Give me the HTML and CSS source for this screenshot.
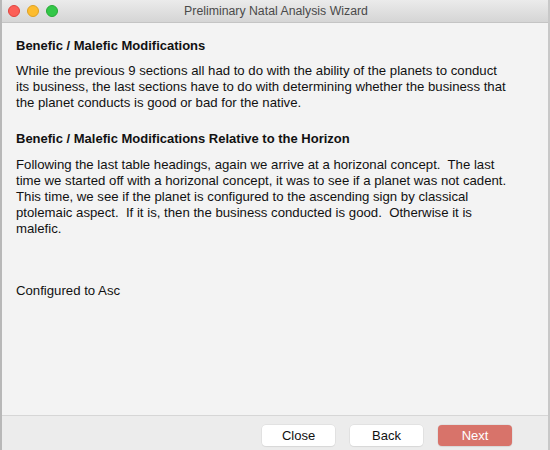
FILE: index.html
```html
<!DOCTYPE html>
<html>
<head>
<meta charset="utf-8">
<link rel="stylesheet" href="styles.css">
</head>
<body>
<div class="window">
  <div class="titlebar">
    <div class="lights">
      <span class="light red"></span>
      <span class="light yellow"></span>
      <span class="light green"></span>
    </div>
    <div class="title">Preliminary Natal Analysis Wizard</div>
  </div>
  <div class="content">
    <h2 class="heading">Benefic / Malefic Modifications</h2>
    <p class="para p1">While the previous 9 sections all had to do with the ability of the planets to conduct<br>its business, the last sections have to do with determining whether the business that<br>the planet conducts is good or bad for the native.</p>
    <h2 class="heading h2">Benefic / Malefic Modifications Relative to the Horizon</h2>
    <p class="para p2">Following the last table headings, again we arrive at a horizonal concept.&nbsp; The last<br>time we started off with a horizonal concept, it was to see if a planet was not cadent.<br>This time, we see if the planet is configured to the ascending sign by classical<br>ptolemaic aspect.&nbsp; If it is, then the business conducted is good.&nbsp; Otherwise it is<br>malefic.</p>
    <p class="status">Configured to Asc</p>
  </div>
  <div class="footer">
    <button class="btn">Close</button>
    <button class="btn">Back</button>
    <button class="btn primary">Next</button>
  </div>
</div>
</body>
</html>
```
FILE: styles.css
```css
html, body {
  margin: 0;
  padding: 0;
  width: 550px;
  height: 450px;
  overflow: hidden;
  background: #ececec;
}
.window {
  width: 550px;
  height: 450px;
  box-sizing: border-box;
  border-left: 2px solid #b8b8b8;
  border-right: 2px solid #c8c8c8;
  display: flex;
  flex-direction: column;
  font-family: "Liberation Sans", Arial, sans-serif;
  color: #111;
}
.titlebar {
  height: 22px;
  flex: none;
  background: linear-gradient(#ebebeb, #d5d5d5);
  border-bottom: 1px solid #c4c4c4;
  position: relative;
  display: flex;
  align-items: center;
  justify-content: center;
}
.lights {
  position: absolute;
  left: 6px;
  top: 5px;
  display: flex;
  gap: 7px;
}
.light {
  width: 12px;
  height: 12px;
  border-radius: 50%;
  box-sizing: border-box;
}
.red { background: #fc5f57; border: 1px solid #e0443e; }
.yellow { background: #fdbc2e; border: 1px solid #dea123; }
.green { background: #33c748; border: 1px solid #27aa35; }
.title {
  font-size: 12.3px;
  color: #4a4a4a;
  margin-left: 2px;
}
.content {
  flex: 1;
  background: #f3f3f3;
  border-bottom: 1px solid #d6d6d6;
  padding: 15px 14px 0 14px;
  font-size: 13.2px;
  line-height: 16px;
  white-space: nowrap;
}
.heading {
  font-size: 13px;
  font-weight: bold;
  margin: 0;
  line-height: 16px;
}
.para {
  margin: 0;
}
.p1 {
  margin-top: 9px;
}
.h2 {
  margin-top: 20px;
}
.p2 {
  margin-top: 10px;
}
.status {
  margin: 46px 0 0 0;
}
.footer {
  height: 34px;
  flex: none;
  background: #ececec;
  display: flex;
  justify-content: flex-end;
  align-items: center;
  gap: 15px;
  padding: 4px 36px 0 0;
  box-sizing: border-box;
}
.btn {
  width: 73px;
  height: 21px;
  border: none;
  border-radius: 4px;
  background: #ffffff;
  box-shadow: 0 0 0 0.5px #d8d8d8, 0 1px 1px rgba(0,0,0,0.08);
  font-family: "Liberation Sans", Arial, sans-serif;
  font-size: 13px;
  color: #111;
  padding: 0;
}
.primary {
  background: #d8736a;
  color: #fff;
  width: 74px;
}
```
